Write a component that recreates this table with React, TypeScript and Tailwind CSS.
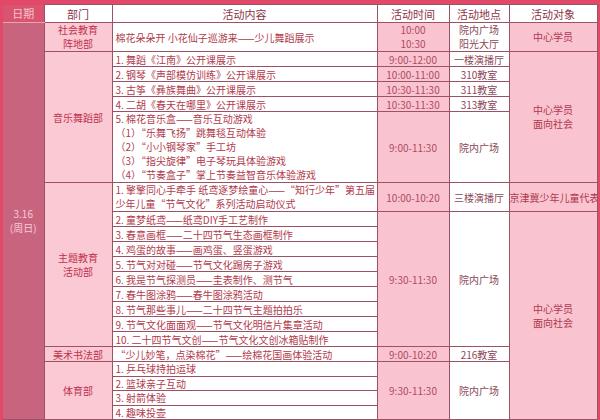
const font = { fontFamily: '"Noto Sans CJK SC", "Noto Sans", sans-serif' }

const bd = 'border border-[#9a5264]'
const pink = 'bg-[#f9c4d0]'
const dept = 'bg-[#fac9d4] text-center text-[10px] leading-[13px] text-[#c0324f]'
const content = 'bg-white px-[3px] text-left text-[10px] leading-[13px] text-[#b03a4c] whitespace-nowrap overflow-hidden'
const time = `${pink} text-center text-[10px] leading-[13px] text-[#b04a5e]`
const place = 'bg-white text-center text-[10px] leading-[13px] text-[#8c4858] whitespace-nowrap'
const target = `${pink} text-center text-[10px] leading-[14px] text-[#b0384e]`

const music = [
  { text: '1. 舞蹈《江南》公开课展示', time: '9:00-12:00', place: '一楼演播厅' },
  { text: '2. 钢琴《声部模仿训练》公开课展示', time: '10:00-11:00', place: '310教室' },
  { text: '3. 古筝《彝族舞曲》公开课展示', time: '10:30-11:30', place: '311教室' },
  { text: '4. 二胡《春天在哪里》公开课展示', time: '10:30-11:30', place: '313教室' },
]

const musicGames = [
  '5. 棉花音乐盒——音乐互动游戏',
  '（1）“乐舞飞扬”跳舞毯互动体验',
  '（2）“小小钢琴家”手工坊',
  '（3）“指尖旋律”电子琴玩具体验游戏',
  '（4）“节奏盒子”掌上节奏益智音乐体验游戏',
]

const themes = [
  '2. 童梦纸鸢——纸鸢DIY手工艺制作',
  '3. 春意画框——二十四节气生态画框制作',
  '4. 鸡蛋的故事——画鸡蛋、竖蛋游戏',
  '5. 节气对对碰——节气文化踢房子游戏',
  '6. 我是节气探测员——圭表制作、测节气',
  '7. 春牛图涂鸦——春牛图涂鸦活动',
  '8. 节气那些事儿——二十四节气主题拍拍乐',
  '9. 节气文化面面观——节气文化明信片集章活动',
  '10. 二十四节气文创——节气文化文创冰箱贴制作',
]

const sports = ['1. 乒乓球持拍运球', '2. 篮球亲子互动', '3. 射箭体验', '4. 趣味投壶']

export default function App() {
  return (
    <div className="w-[600px] h-[420px] overflow-hidden bg-[#e24868] pt-[4px] pb-[3px] px-[3px]" style={font}>
      <table className="w-full border-collapse table-fixed">
        <colgroup>
          <col className="w-[41px]" />
          <col className="w-[68px]" />
          <col className="w-[265px]" />
          <col className="w-[72px]" />
          <col className="w-[60px]" />
          <col className="w-[88px]" />
        </colgroup>
        <tbody>
          <tr className="h-[18px] text-[11px] leading-[14px] text-[#8c3447]">
            <td className="bg-[#d9546f] text-center text-[#f8c6d0] border-b border-[#eda2b2]">日期</td>
            <td className={`${bd} bg-white text-center`}>部门</td>
            <td className={`${bd} bg-white text-center`}>活动内容</td>
            <td className={`${bd} bg-white text-center`}>活动时间</td>
            <td className={`${bd} bg-white text-center`}>活动地点</td>
            <td className={`${bd} bg-white text-center`}>活动对象</td>
          </tr>

          <tr className="h-[28px]">
            <td rowSpan={21} className={`${bd} border-l-0 bg-[#c9647f] text-center text-[10px] leading-[14px] text-[#f8cbd5]`}>
              <div>3.16</div>
              <div>(周日)</div>
            </td>
            <td className={`${bd} ${dept} leading-[14px] bg-[#f7bfcc] text-[#9c3a50]`}>
              <div>社会教育</div>
              <div>阵地部</div>
            </td>
            <td className={`${bd} ${content}`}>棉花朵朵开 小花仙子巡游来——少儿舞蹈展示</td>
            <td className={`${bd} ${time} leading-[14px]`}>
              <div>10:00</div>
              <div>10:30</div>
            </td>
            <td className={`${bd} ${place} leading-[14px]`}>
              <div>院内广场</div>
              <div>阳光大厅</div>
            </td>
            <td className={`${bd} ${target}`}>中心学员</td>
          </tr>

          {music.map((m, i) => (
            <tr key={m.text} className="h-[15px]">
              {i === 0 && (
                <td rowSpan={5} className={`${bd} ${dept}`}>
                  音乐舞蹈部
                </td>
              )}
              <td className={`${bd} ${content}`}>{m.text}</td>
              <td className={`${bd} ${time}`}>{m.time}</td>
              <td className={`${bd} ${place}`}>{m.place}</td>
              {i === 0 && (
                <td rowSpan={5} className={`${bd} ${target}`}>
                  <div>中心学员</div>
                  <div>面向社会</div>
                </td>
              )}
            </tr>
          ))}
          <tr className="h-[70px]">
            <td className={`${bd} ${content} leading-[14px]`}>
              {musicGames.map((g) => (
                <div key={g}>{g}</div>
              ))}
            </td>
            <td className={`${bd} ${time}`}>9:00-11:30</td>
            <td className={`${bd} ${place}`}>院内广场</td>
          </tr>

          <tr className="h-[28px]">
            <td rowSpan={10} className={`${bd} ${dept} leading-[14px]`}>
              <div>主题教育</div>
              <div>活动部</div>
            </td>
            <td className={`${bd} ${content} leading-[14px]`}>
              <div>1. 擎擎同心手牵手 纸鸢逐梦绘童心——“知行少年”第五届</div>
              <div>少年儿童“节气文化”系列活动启动仪式</div>
            </td>
            <td className={`${bd} ${time}`}>10:00-10:20</td>
            <td className={`${bd} ${place}`}>三楼演播厅</td>
            <td className={`${bd} ${pink} text-left text-[10px] leading-[13px] text-[#b0384e] whitespace-nowrap overflow-hidden`}>
              京津冀少年儿童代表
            </td>
          </tr>
          {themes.map((t, i) => (
            <tr key={t} className="h-[15px]">
              <td className={`${bd} ${content}`}>{t}</td>
              {i === 0 && (
                <>
                  <td rowSpan={9} className={`${bd} ${time}`}>9:30-11:30</td>
                  <td rowSpan={9} className={`${bd} ${place}`}>院内广场</td>
                  <td rowSpan={14} className={`${bd} ${target}`}>
                    <div>中心学员</div>
                    <div>面向社会</div>
                  </td>
                </>
              )}
            </tr>
          ))}

          <tr className="h-[15px]">
            <td className={`${bd} ${dept}`}>美术书法部</td>
            <td className={`${bd} ${content}`}>“少儿妙笔，点染棉花”——绘棉花国画体验活动</td>
            <td className={`${bd} ${time}`}>9:00-10:20</td>
            <td className={`${bd} ${place}`}>216教室</td>
          </tr>

          {sports.map((s, i) => (
            <tr key={s} className="h-[14.5px]">
              {i === 0 && (
                <td rowSpan={4} className={`${bd} ${dept} text-[#8c3c52]`}>
                  体育部
                </td>
              )}
              <td className={`${bd} ${content}`}>{s}</td>
              {i === 0 && (
                <>
                  <td rowSpan={4} className={`${bd} ${time}`}>9:30-11:30</td>
                  <td rowSpan={4} className={`${bd} ${place}`}>院内广场</td>
                </>
              )}
            </tr>
          ))}
        </tbody>
      </table>
    </div>
  )
}
